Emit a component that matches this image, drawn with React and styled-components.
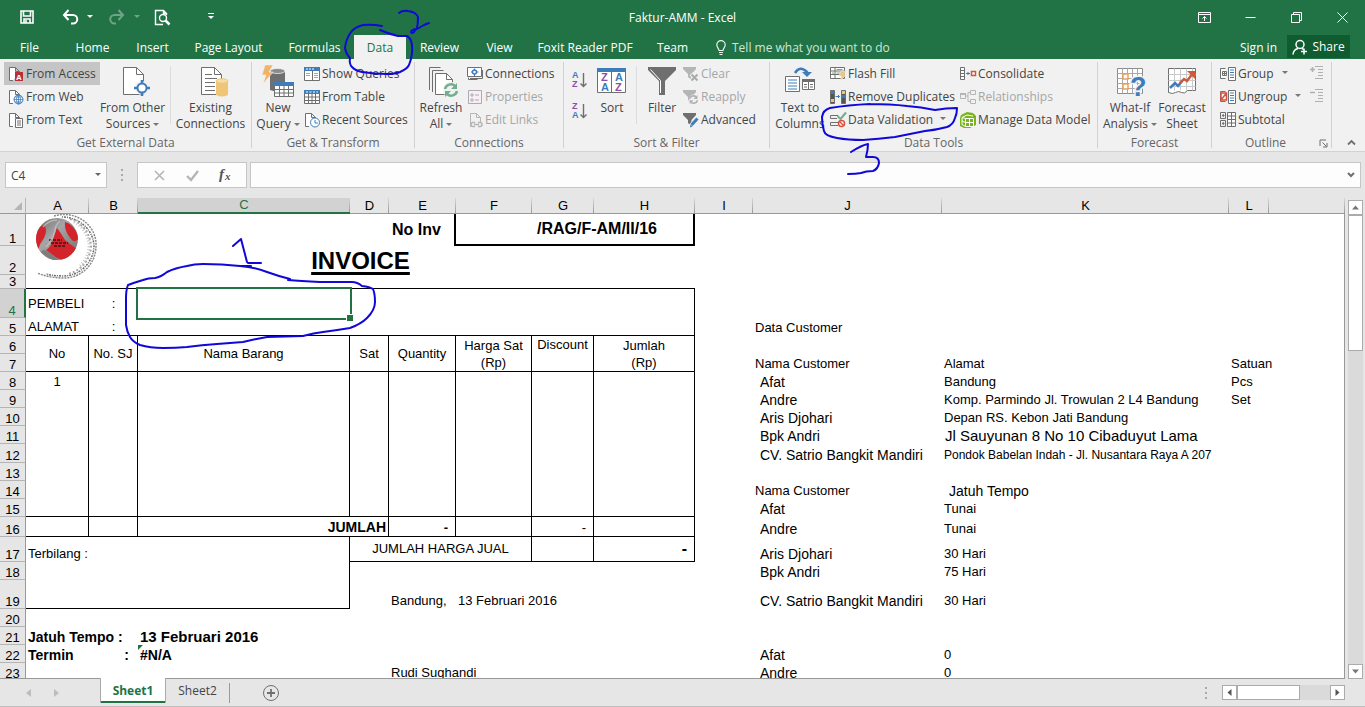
import React from "react"
import styled, { createGlobalStyle, css } from "styled-components"

const GlobalStyle = createGlobalStyle`
  * {
    box-sizing: border-box;
  }
  body {
    margin: 0;
    background: #e6e6e6;
    font-family: "Open Sans", "Noto Sans", sans-serif;
    font-size: 12px;
    color: #444;
  }
  button,
  input {
    font: inherit;
    color: inherit;
    margin: 0;
    padding: 0;
    border: 0;
    background: none;
  }
  svg {
    display: block;
    flex: none;
    overflow: visible;
  }
`

const AppShell = styled.div`
  position: relative;
  display: flex;
  flex-direction: column;
  height: 100vh;
  overflow: hidden;
`

/* ---------- title bar and tabs ---------- */

const TitleBar = styled.header`
  display: grid;
  grid-template-columns: 1fr auto 1fr;
  align-items: center;
  height: 34px;
  flex: none;
  background: #217346;
  color: #fff;
`
const QuickAccess = styled.div`
  display: flex;
  align-items: center;
  padding-left: 19px;
`
const QuickButton = styled.button`
  display: flex;
  align-items: center;
  gap: 8px;
  margin-right: ${p => p.$after || 0}px;
  color: #fff;
  opacity: ${p => (p.disabled ? 0.35 : 1)};
`
const WindowButtons = styled.div`
  display: flex;
  justify-content: flex-end;
`
const WindowButton = styled.button`
  display: flex;
  flex: none;
  align-items: center;
  justify-content: center;
  width: 46px;
  height: 32px;
`
const TabBar = styled.nav`
  display: flex;
  align-items: stretch;
  gap: 1px;
  height: 25px;
  flex: none;
  padding: 1px 15px 0 6px;
  background: #217346;
  color: #fff;
`
const Tab = styled.button`
  width: ${p => p.$width}px;
  text-align: center;
  white-space: nowrap;
  &:first-child {
    margin-right: 8px;
  }
  ${p =>
    p.$active &&
    css`
      background: #f1f1f1;
      color: #217346;
    `}
`
const TellMe = styled.button`
  display: flex;
  align-items: center;
  gap: 6px;
  margin: 0 auto 0 14px;
  color: #cfe6d8;
  white-space: nowrap;
`
const SignIn = styled.a`
  align-self: center;
  margin-right: 9px;
  color: #fff;
  text-decoration: none;
`
const ShareButton = styled.button`
  display: flex;
  align-items: center;
  justify-content: center;
  gap: 4px;
  width: 63px;
  margin-bottom: 1px;
  background: #0e5c2f;
  color: #fff;
`

/* ---------- ribbon ---------- */

const Ribbon = styled.section`
  display: flex;
  flex: none;
  height: 93px;
  padding-top: 3px;
  background: #f1f1f1;
  border-bottom: 1px solid #d2d2d2;
`
const Group = styled.div`
  display: flex;
  flex-direction: column;
  flex: none;
  width: ${p => p.$width}px;
  height: 86px;
  border-right: 1px solid #d2d2d2;
`
const GroupBody = styled.div`
  display: flex;
  height: 69px;
  padding-left: ${p => p.$pad || 4}px;
`
const GroupFooter = styled.div`
  display: flex;
  align-items: center;
  height: 24px;
  padding-right: ${p => (p.$launcher ? 3 : 0)}px;
`
const GroupLabel = styled.div`
  flex: 1;
  text-align: center;
  line-height: 24px;
  color: #666;
`
const LargeButton = styled.button`
  display: flex;
  flex-direction: column;
  align-items: center;
  flex: none;
  gap: 2px;
  width: ${p => p.$width}px;
  padding-top: 4px;
  line-height: 16px;
  white-space: nowrap;
`
const SmallColumn = styled.div`
  display: flex;
  flex-direction: column;
  align-items: stretch;
  flex: none;
  width: ${p => p.$width}px;
  height: 69px;
`
const SmallButton = styled.button`
  display: flex;
  align-items: center;
  gap: 2px;
  height: 23px;
  padding-left: 4px;
  white-space: nowrap;
  background: ${p => (p.$active ? "#c5c5c5" : "transparent")};
  color: ${p => (p.disabled ? "#a6a6a6" : "#444")};
`
const Divider = styled.div`
  width: 1px;
  height: 58px;
  margin: 4px ${p => p.$gap}px 0;
  background: #dcdcdc;
`
const SortColumn = styled.div`
  display: flex;
  flex-direction: column;
  gap: 13px;
  width: 24px;
  padding-top: 9px;
`
const IconColumn = styled.div`
  display: flex;
  flex-direction: column;
  gap: 7px;
  padding-top: 3px;
`
const RibbonEnd = styled.div`
  display: flex;
  flex: 1;
  align-items: flex-end;
  justify-content: center;
  padding: 0 0 5px 5px;
`
const Caret = styled.span`
  display: inline-block;
  margin: 0 0 2px ${p => p.$gap || 3}px;
  border: 3px solid transparent;
  border-top-color: ${p => p.$color || "#777"};
  border-bottom: 0;
`

/* ---------- formula bar ---------- */

const FormulaRow = styled.div`
  display: flex;
  align-items: center;
  flex: none;
  height: 46px;
  padding: 0 4px 0 5px;
`
const FieldBox = styled.div`
  display: flex;
  align-items: center;
  height: 26px;
  width: ${p => (p.$width ? `${p.$width}px` : "auto")};
  flex: ${p => (p.$width ? "none" : "1")};
  padding: 0 5px;
  background: #fdfdfd;
  border: 1px solid #c6c6c6;
`
const FormulaField = styled(FieldBox)`
  margin-left: 3px;
`
const FieldInput = styled.input`
  flex: 1;
  min-width: 0;
  height: 22px;
  outline: 0;
`
const FormulaButton = styled.button`
  display: flex;
  flex: 1;
  justify-content: center;
`
const Dots = styled.div`
  display: flex;
  flex-direction: column;
  align-items: center;
  gap: 3px;
  width: ${p => p.$width}px;
  &::before,
  &::after,
  span {
    content: "";
    width: 2px;
    height: 2px;
    background: #a8a8a8;
  }
`

/* ---------- sheet ---------- */

const SheetArea = styled.main`
  display: flex;
  flex: 1;
  min-height: 0;
`
const GridPane = styled.div`
  flex: 1;
  min-width: 0;
  overflow: hidden;
  border-bottom: 1px solid #999;
`
const Grid = styled.table`
  width: 100%;
  table-layout: fixed;
  border-collapse: separate;
  border-spacing: 0;
  background: #fff;
  font-family: "Liberation Sans", Arial, sans-serif;
  font-size: 13px;
  line-height: 16px;
  color: #000;
`
const ColumnHead = styled.th`
  height: 16px;
  padding: 0;
  font-weight: normal;
  line-height: 15px;
  border-bottom: 1px solid #999;
  background: linear-gradient(#d8d8d8, #999) right / 1px 100% no-repeat #e6e6e6;
  ${p =>
    p.$active &&
    css`
      background-color: #d2d2d2;
      border-bottom: 2px solid #217346;
      line-height: 14px;
      color: #217346;
    `}
`
const CornerHead = styled.th`
  padding: 0 3px 3px 0;
  background: #e6e6e6;
  border-bottom: 1px solid #999;
  border-right: 1px solid #b5b5b5;
  vertical-align: bottom;
`
const CornerMark = styled.div`
  width: 0;
  margin-left: auto;
  border-left: 8px solid transparent;
  border-bottom: 8px solid #b5b5b5;
`
const RowHead = styled.th`
  padding: 0;
  font-weight: normal;
  line-height: 13px;
  vertical-align: bottom;
  background: #e6e6e6;
  border-bottom: 1px solid #b5b5b5;
  border-right: 1px solid #999;
  ${p =>
    p.$active &&
    css`
      background: #d2d2d2;
      border-right: 2px solid #217346;
      color: #217346;
    `}
`
const Cell = styled.td`
  position: relative;
  padding: 0 ${p => p.$padRight ?? 2}px 0 ${p => p.$pad ?? 2}px;
  white-space: pre;
  font-size: ${p => p.$size || 13}px;
  font-weight: ${p => (p.$bold ? "bold" : "normal")};
  text-align: ${p => p.$align || "left"};
  vertical-align: ${p => p.$valign || "bottom"};
  line-height: ${p => p.$line || 16}px;
  border: 0 solid #000;
  border-right-width: ${p => p.$right}px;
  border-bottom-width: ${p => p.$bottom}px;
`
const EdgeCell = styled.td`
  border-right: 1px solid #999;
`
const Heading = styled.span`
  text-decoration: underline;
  text-decoration-thickness: 3px;
  text-underline-offset: 3px;
  text-decoration-skip-ink: none;
`
const Picture = styled.div`
  position: absolute;
  z-index: 1;
  top: 0;
  left: 8px;
`
const Selection = styled.div`
  position: absolute;
  z-index: 2;
  inset: -2px -2px -2px -2px;
  border: 2px solid #217346;
  &::after {
    content: "";
    position: absolute;
    right: -3px;
    bottom: -3px;
    width: 6px;
    height: 6px;
    background: #217346;
    border: solid #fff;
    border-width: 1px 0 0 1px;
  }
`
const ErrorFlag = styled.span`
  position: absolute;
  top: 0;
  left: 0;
  border-top: 5px solid #217346;
  border-right: 5px solid transparent;
`

/* ---------- scroll bars and sheet tabs ---------- */

const ScrollColumn = styled.div`
  display: flex;
  flex-direction: column;
  flex: none;
  width: 15px;
  margin: 2px 2px 0 3px;
  background: #dadada;
`
const ScrollRow = styled.div`
  display: flex;
  width: 123px;
  height: 15px;
  margin-right: 20px;
  background: #dadada;
`
const ScrollButton = styled.button`
  display: flex;
  align-items: center;
  justify-content: center;
  flex: none;
  width: 15px;
  height: 15px;
  background: #fff;
  border: 1px solid #ababab;
`
const Thumb = styled.div`
  flex: none;
  width: ${p => p.$width}px;
  height: ${p => p.$height}px;
  margin: 0 auto auto 0;
  background: #fff;
  border: 1px solid #ababab;
`
const SheetBar = styled.footer`
  display: flex;
  align-items: center;
  flex: none;
  height: 28px;
  border-bottom: 1px solid #c0c0c0;
`
const SheetNav = styled.div`
  display: flex;
  gap: 23px;
  width: 100px;
  padding-left: 26px;
`
const SheetTab = styled.button`
  align-self: flex-start;
  flex: none;
  width: ${p => (p.$active ? 66 : 63)}px;
  height: 25px;
  margin-top: -1px;
  ${p =>
    p.$active &&
    css`
      position: relative;
      background: #fff;
      border: solid #ababab;
      border-width: 0 1px;
      box-shadow: inset 0 -2px #217346;
      font-weight: bold;
      color: #217346;
    `}
`
const TabDivider = styled.div`
  width: 1px;
  height: 20px;
  margin-right: 33px;
  background: #999;
`
const AddSheet = styled.button`
  margin-right: auto;
`

const Ink = styled.svg`
  position: absolute;
  z-index: 5;
  top: 0;
  left: 0;
  pointer-events: none;
`

/* ---------- icons ---------- */

const GRAY = "#6f6f6f"
const BLUE = "#3f7cba"
const PURPLE = "#8a4fa8"
const GREEN = "#6fae8e"
const SAND = "#efc678"

const Icon = ({ size = 16, width, height, children, ...rest }) => (
  <svg
    width={width || size}
    height={height || size}
    viewBox={`0 0 ${width || size} ${height || size}`}
    fill="none"
    stroke={GRAY}
    aria-hidden="true"
    {...rest}
  >
    {children}
  </svg>
)

const SmallPage = () => (
  <path d="M5 14.500H1.500V1.500H7.500L11.500 5.500V7M7.500 1.500V5.500H11.500" fill="#fff" />
)

const Letter = ({ x, y, size, color, children }) => (
  <text
    x={x}
    y={y}
    fontSize={size}
    fontWeight="bold"
    fontFamily="Liberation Sans"
    fill={color}
    stroke="none"
  >
    {children}
  </text>
)

const AccessIcon = () => (
  <Icon>
    <SmallPage />
    <path d="M7 6h8v9H7z" fill="#b5303a" stroke="none" />
    <Letter x={8} y={14} size={8} color="#fff">A</Letter>
  </Icon>
)
const WebIcon = () => (
  <Icon>
    <SmallPage />
    <circle cx="10.500" cy="10.500" r="4.500" fill="#fff" stroke={BLUE} />
    <path d="M6 10.500h9M10.500 6v9M7 8h7M7 13h7" stroke={BLUE} strokeWidth=".8" />
    <ellipse cx="10.500" cy="10.500" rx="2" ry="4.500" stroke={BLUE} strokeWidth=".8" />
  </Icon>
)
const TextIcon = () => (
  <Icon>
    <SmallPage />
    <path d="M7.500 6.500h7v9h-7z" fill="#fff" />
    <path d="M9 9h4M9 11h4M9 13h4" />
  </Icon>
)
const OtherSourcesIcon = () => (
  <Icon size={32}>
    <path d="M6.500 1.500h13l7 7v20h-20z" fill="#fff" />
    <path d="M19.500 1.500v7h7" />
    <circle cx="25" cy="22" r="7" fill="#f1f1f1" stroke="none" />
    <circle cx="25" cy="22" r="4.500" fill="#fff" stroke={BLUE} strokeWidth="2" />
    <path d="M25 14v4M25 26v4M17 22h4M29 22h4" stroke={BLUE} strokeWidth="2.500" />
  </Icon>
)
const ExistingIcon = () => (
  <Icon size={32}>
    <path d="M6.500 1.500h13l7 7v20h-20z" fill="#fff" />
    <path d="M19.500 1.500v7h7M10 8.500h7M10 12.500h12M10 16.500h10M10 20.500h10M10 24.500h10" />
    <path d="M21 15v14q6 3 12 0V15z" fill={SAND} stroke="none" />
    <ellipse cx="27" cy="15" rx="6" ry="2.200" fill="#f6dca6" stroke={SAND} />
  </Icon>
)
const NewQueryIcon = () => (
  <Icon size={32}>
    <path d="M8 5v19q7 3 15 1V5z" fill={GRAY} stroke="none" />
    <ellipse cx="15.500" cy="5" rx="7.500" ry="2.500" fill="#8b8b8b" stroke="#f1f1f1" strokeWidth=".8" />
    <path d="M3-1h8L7 6h4L1 18l3-9H0z" fill="#f0b36b" stroke="#f1f1f1" strokeWidth=".6" />
    <path d="M12.500 16.500h19v14h-19z" fill="#fff" />
    <path d="M12 16h20v4H12z" fill={BLUE} stroke="none" />
    <path d="M12.500 23.500h19M12.500 27h19M17.500 20v10.500M22 20v10.500M26.500 20v10.500" />
  </Icon>
)
const ShowQueriesIcon = () => (
  <Icon>
    <path d="M.5 1.500h15v13H.5z" fill="#fff" />
    <path d="M0 1h16v4H0z" fill={BLUE} stroke="none" />
    <path d="M8.500 5v9.500" />
    <path d="M2 7.500h4M2 9.500h4M10 7.500h4M10 9.500h4M10 11.500h4" stroke="#8fa9c6" />
    <path d="M2 3h8" stroke="#fff" strokeDasharray="2 1" />
  </Icon>
)
const TableIcon = () => (
  <Icon>
    <path d="M.5 1.500h15v13H.5z" fill="#fff" />
    <path d="M0 1h16v4H0z" fill={BLUE} stroke="none" />
    <path d="M.5 8h15M.5 11.500h15M4.500 5v9.500M8 5v9.500M11.500 5v9.500" />
    <path d="M2 3h12" stroke="#fff" strokeDasharray="2 1.500" />
  </Icon>
)
const RecentIcon = () => (
  <Icon>
    <SmallPage />
    <circle cx="11" cy="10.500" r="4.500" fill="#fff" stroke={BLUE} />
    <path d="M11 8v3h3" stroke={BLUE} />
  </Icon>
)
const RefreshMark = ({ x, y, color = GREEN, scale = 1 }) => (
  <g transform={`translate(${x} ${y}) scale(${scale})`} stroke={color} strokeWidth="2.500">
    <path d="M1 6A6 6 0 0 1 11 3M13 8A6 6 0 0 1 3 11" />
    <path d="M13 0v6H7zM1 14V8h6z" fill={color} stroke="none" />
  </g>
)
const RefreshAllIcon = () => (
  <Icon size={32}>
    <path d="M4.500 24V1.500h11M7.500 26V4.500h11" />
    <path d="M10.500 7.500h11l6 6v15h-17z" fill="#fff" />
    <path d="M21.500 7.500v6h6" />
    <circle cx="26" cy="24" r="8" fill="#f1f1f1" stroke="none" />
    <RefreshMark x={19} y={17} />
  </Icon>
)
const ConnectionsIcon = () => (
  <Icon>
    <path d="M1.500 11.500v2h9M.500 1.500h14v9H.500z" fill="#fff" />
    <path d="M15.500 4v8.500H3" />
    <circle cx="7.500" cy="6" r="2" stroke={BLUE} strokeWidth="1.500" />
    <path d="M7.500 2.500v2M7.500 8v2M4 6h1.500M9.500 6h2" stroke={BLUE} />
  </Icon>
)
const PropertiesIcon = () => (
  <Icon stroke="#b0a8b4">
    <path d="M1.500 1.500h13v13h-13z" fill="#f6f0f6" />
    <path d="M4 5h2v2H4zM4 10h2v2H4zM8 6h4M8 11h4" />
  </Icon>
)
const EditLinksIcon = () => (
  <Icon stroke="#b5b5b5">
    <path d="M6 14.500H3.500V1.500H9.500L13.500 5.500V10M9.500 1.500V5.500H13.500" />
    <path d="M8 10.500H6a2 2 0 0 0 0 4h2M11 10.500h2a2 2 0 0 1 0 4h-2M7 12.500h5" strokeWidth="1.500" />
  </Icon>
)
const SortArrowIcon = ({ top, bottom }) => (
  <Icon width={16} height={18}>
    <Letter x={0} y={7} size={9} color={top === "A" ? BLUE : PURPLE}>{top}</Letter>
    <Letter x={0} y={16} size={9} color={bottom === "A" ? BLUE : PURPLE}>{bottom}</Letter>
    <path d="M11.500 2v13M8.500 12.500l3 3 3-3" strokeWidth="1.400" />
  </Icon>
)
const SortIcon = () => (
  <Icon size={32}>
    <path d="M1.500 2.500h28v24h-28z" fill="#fff" />
    <path d="M15.500 6v20" />
    <path d="M1 2h29v4H1z" fill={BLUE} stroke="none" />
    <Letter x={5} y={15} size={11} color={PURPLE}>Z</Letter>
    <Letter x={5} y={25} size={11} color={BLUE}>A</Letter>
    <Letter x={19} y={15} size={11} color={BLUE}>A</Letter>
    <Letter x={19} y={25} size={11} color={PURPLE}>Z</Letter>
  </Icon>
)
const FilterIcon = () => (
  <Icon size={32}>
    <path d="M2 1h28v3L19 15v14h-6V15L2 4z" fill={GRAY} stroke="none" />
    <path d="M4.500 3.500l10 11V27" stroke="#fff" />
  </Icon>
)
const SmallFunnel = ({ color }) => (
  <path d="M0 1h13v2L8.500 8v6L5 11V8L0 3z" fill={color} stroke="none" />
)
const ClearIcon = () => (
  <Icon>
    <SmallFunnel color="#b5b5b5" />
    <path d="M8 8l7 7M15 8l-7 7" stroke="#f1f1f1" strokeWidth="4" />
    <path d="M8.500 8.500l6 6M14.500 8.500l-6 6" stroke="#aaa" strokeWidth="2" />
  </Icon>
)
const ReapplyIcon = () => (
  <Icon>
    <SmallFunnel color="#b5b5b5" />
    <circle cx="11" cy="10.500" r="5" fill="#f1f1f1" stroke="none" />
    <RefreshMark x={6} y={6} color="#b0b0b0" scale={0.65} />
  </Icon>
)
const AdvancedIcon = () => (
  <Icon>
    <SmallFunnel color={GRAY} />
    <path d="M15 6l-6 7-2 3" stroke="#f1f1f1" strokeWidth="5" />
    <path d="M14.500 6.500L8.500 13" stroke={BLUE} strokeWidth="3" />
    <path d="M7 15.500l.5-3 2 2z" fill={BLUE} stroke="none" />
  </Icon>
)
const TextToColumnsIcon = () => (
  <Icon size={32}>
    <path d="M1.500 10.500h14v15h-14z" fill="#fff" />
    <path d="M4 14h9M4 17h9M4 20h9M4 23h9" stroke={BLUE} />
    <path d="M18.500 13.500h12v10h-12z" fill="#fff" />
    <path d="M18 13h13v3H18z" fill={GRAY} stroke="none" />
    <path d="M24.500 16v8M20 18.500h3M20 21h3M26 18.500h3M26 21h3" />
    <path d="M11 7q5-8 12-1v2" stroke={BLUE} strokeWidth="2.500" />
    <path d="M18 6h10l-5 5z" fill={BLUE} stroke="none" />
  </Icon>
)
const FlashFillIcon = () => (
  <Icon>
    <path d="M.5 1.500h14v11H.5z" fill="#fff" />
    <path d="M.5 5h14M.5 8.500h14M5 1.500v11" />
    <path d="M6.500 3.500h6M6.500 7h6M2 7h2" stroke={GREEN} />
    <path d="M11 5h5l-2 4h2l-6 6 1.500-5H9z" fill={SAND} stroke="#f1f1f1" strokeWidth=".5" />
  </Icon>
)
const DuplicatesIcon = () => (
  <Icon>
    <path d="M.5 1.500h4v13h-4zM11.500 1.500h4v13h-4z" fill="#555" />
    <path d="M1 2h3v3H1zM12 6h3v3h-3z" fill={BLUE} stroke="none" />
    <path d="M1 10h3v3H1zM12 2h3v3h-3z" fill={SAND} stroke="none" />
    <path d="M5.500 7.500h4M8 6l1.500 1.500L8 9" stroke={BLUE} />
  </Icon>
)
const ValidationIcon = () => (
  <Icon>
    <path d="M8 3.500H.5v3H7M8 10.500H.5v3H8" />
    <path d="M7.500 4l3 3L16 .5" stroke={GREEN} strokeWidth="2" />
    <circle cx="11.500" cy="11.500" r="3" fill="#fff" stroke="#d9503c" strokeWidth="1.500" />
    <path d="M9.500 9.500l4 4" stroke="#d9503c" strokeWidth="1.500" />
  </Icon>
)
const ConsolidateIcon = () => (
  <Icon>
    <path d="M.5 1.500h4v12h-4zM.5 4.500h4M.5 7.500h4M.5 10.500h4" fill="#fff" />
    <path d="M6 7.500h4M8 6v3" stroke={BLUE} />
    <path d="M11.500 5.500h4v4h-4z" fill="#fff" stroke="#d9503c" strokeWidth="1.500" />
  </Icon>
)
const RelationshipsIcon = () => (
  <Icon stroke="#b5b5b5">
    <path d="M.5 4.500h5v5h-5zM10.500 1.500h5v4h-5zM10.500 10.500h5v4h-5zM5.500 7h2.500M8 3.500V12.500M8 3.500h2.500M8 12.500h2.500" />
    <path d="M0 4h6v2H0z" fill="#b5b5b5" stroke="none" />
  </Icon>
)
const ModelIcon = () => (
  <Icon>
    <path d="M1 3l6-3 6 1 3 3v9l-6 3H4l-4-2V6z" fill="#7ab41d" stroke="none" />
    <path d="M2 5.500L7 3l6 1M5.500 6.500h8v8h-8zM5.500 10.500h8M9.500 6.500v8M2 5.500v7l3.500 2M2 9l3.500 1.500M2 5.500l3.500 1" stroke="#fff" />
  </Icon>
)
const WhatIfIcon = () => (
  <Icon size={32}>
    <path d="M3.500 2.500h25v25h-25z" fill="#fff" stroke="#8c8c8c" />
    <path d="M8.500 2.500v25M13.500 2.500v25M18.500 2.500v25M23.500 2.500v25M3.500 7.500h25M3.500 12.500h25M3.500 17.500h25M3.500 22.500h25" stroke="#a8a8a8" />
    <path d="M9 8h5v5H9zM9 18h5v5H9z" fill="#fff" stroke="#e8a25c" strokeWidth="1.500" />
    <text x="16" y="30" fontSize="27" fontWeight="bold" fontFamily="Liberation Sans" fill={BLUE} stroke="#f1f1f1" strokeWidth="3" paintOrder="stroke">?</text>
  </Icon>
)
const ForecastIcon = () => (
  <Icon size={32}>
    <path d="M2.500 2.500h27v22h-8q-3 4-6 2t-6 0-7 0z" fill="#fff" />
    <path d="M8.500 2.500v22M14.500 2.500v22M20.500 2.500v22M26.500 2.500v22M2.500 8.500h27M2.500 14.500h27M2.500 20.500h27" stroke="#c9c9c9" />
    <path d="M4 22l5-5 3 3 4-5" stroke={BLUE} strokeWidth="2.500" />
    <path d="M14 17l4-4 3 2 6-8" stroke="#cf5b36" strokeWidth="2.500" />
    <path d="M21 5h8v8z" fill="#cf5b36" stroke="none" />
  </Icon>
)
const GroupIcon = ({ ungroup }) => (
  <Icon>
    <path d="M5.500 2.500h-5v10h5M8.500 1.500h7v13h-7z" fill="#fff" />
    <path d="M10 4h4M10 6.500h4M10 9h4M10 11.500h4" stroke={BLUE} />
    {ungroup ? (
      <path d="M1 4h5.500v7H1zM1 11L6.500 4" stroke="#d9503c" strokeWidth="1.500" />
    ) : (
      <path d="M2.500 5.500h4v4h-4zM3 7.500h3M4.500 6v3" />
    )}
  </Icon>
)
const SubtotalIcon = () => (
  <Icon>
    <path d="M.5.5h5v6h-5zM.5 8.500h5v6h-5zM2 3.500h2.500M3.200 2v3M2 11.500h2.500M3.200 10v3" />
    <path d="M7.500.5h8v14h-8zM7.500 4h8M7.500 7.500h8M7.500 11h8M11.500.5v14" fill="#fff" />
  </Icon>
)
const DetailIcon = ({ plus }) => (
  <Icon stroke="#b0b0b0">
    <path d={plus ? "M1 4.500h5M3.500 2v5" : "M1 4.500h5"} strokeWidth="1.500" />
    <path d="M6 1.500h8M9 4.500h5M9 7.500h5M9 10.500h5M6 13.500h8" />
  </Icon>
)

const LogoPicture = () => (
  <svg width="64" height="66" viewBox="0 0 64 66" fill="none" aria-label="Logo" role="img">
    <defs>
      <linearGradient id="shell" x1="0" y1="0" x2="1" y2="1">
        <stop offset="0" stopColor="#6a6a6a" />
        <stop offset=".4" stopColor="#a5a5a5" />
        <stop offset="1" stopColor="#6e6e6e" />
      </linearGradient>
      <clipPath id="ballClip">
        <circle cx="23" cy="25" r="21" />
      </clipPath>
    </defs>
    <path d="M20 2A32 30 0 0 1 62 32A32 32 0 0 1 30 64Q16 64 3 59" stroke="#8a8a8a" strokeWidth="1.500" strokeDasharray="2 1" />
    <path d="M28 3A32 30 0 0 1 60 32A31 31 0 0 1 30 62Q20 62 12 60" stroke="#6a6a6a" strokeWidth="1.500" strokeDasharray="1 1 2 1" />
    <path d="M36 5A28 30 0 0 1 57 32A30 30 0 0 1 34 60" stroke="#a5a5a5" strokeWidth="2" strokeDasharray="2 2" />
    <path d="M40 8A26 28 0 0 1 55 30A28 28 0 0 1 46 52" stroke="#c4c4c4" strokeWidth="3" strokeDasharray="1 2" />
    <circle cx="23" cy="25" r="21" fill="url(#shell)" />
    <g clipPath="url(#ballClip)" fill="#d3242b">
      <path d="M1 24Q2 13 10 11q4 5 0 13-4 5-6 12z" />
      <path d="M31 8q9 2 14 16-4 6-8 1-7-8-6-17z" />
      <path d="M23 14q4 5 8 12 6 5 12 9-4 9-11 12l-9-3-11-8q4-2 7-10 2-8 4-12z" />
      <path d="M10 36q8 2 14 11l-4 2Q12 42 6 38z" fill="#7d7d7d" />
      <path d="M15 26h13M17 29h17M20 32h12" stroke="#4a1014" strokeWidth="1.500" strokeDasharray="3 1" />
    </g>
    <path d="M9 13Q15 6 23 6M26 7q-5 4-5 10-3 10-9 16" stroke="#c8c8c8" strokeWidth="1.500" opacity=".7" />
  </svg>
)

/* ---------- sheet data ---------- */

const columns = [
  ["A", 63], ["B", 49], ["C", 212], ["D", 39], ["E", 67], ["F", 76], ["G", 62],
  ["H", 101], ["I", 58], ["J", 189], ["K", 287], ["L", 40],
]
const letters = columns.map(([name]) => name)

const rowHeights = [
  32, 29, 14, 29, 18, 18, 18, 18, 18, 18, 18, 19, 18, 18, 18, 20, 25, 18, 29, 18, 18, 18, 18,
]

const head = { align: "center", valign: "middle", rows: 2, line: 17 }
const name = { size: 14, pad: 7 }

const cells = {
  A1: { text: <Picture><LogoPicture /></Picture> },
  E1: { text: "No Inv", size: 16, bold: true, valign: "middle", pad: 3, right: 2 },
  F1: { text: "/RAG/F-AM/II/16", cols: 3, size: 16, bold: true, valign: "middle", align: "right", padRight: 36, right: 2, bottom: 2 },
  A2: { text: <Heading>INVOICE</Heading>, cols: 8, size: 24, bold: true, align: "center", valign: "middle" },
  A4: { text: "PEMBELI", valign: "middle" },
  B4: { text: ":", align: "center", valign: "middle" },
  C4: { text: <Selection /> },
  A5: { text: "ALAMAT", valign: "middle" },
  B5: { text: ":", align: "center", valign: "middle" },
  J5: { text: "Data Customer" },
  A6: { text: "No", ...head },
  B6: { text: "No. SJ", ...head },
  C6: { text: "Nama Barang", ...head },
  D6: { text: "Sat", ...head },
  E6: { text: "Quantity", ...head },
  F6: { text: "Harga Sat\n(Rp)", ...head },
  G6: { text: "Discount", ...head, valign: "top" },
  H6: { text: "Jumlah\n(Rp)", ...head },
  J7: { text: "Nama Customer" },
  K7: { text: "Alamat" },
  L7: { text: "Satuan" },
  A8: { text: "1", align: "center" },
  J8: { text: "Afat", ...name },
  K8: { text: "Bandung" },
  L8: { text: "Pcs" },
  J9: { text: "Andre", ...name },
  K9: { text: "Komp. Parmindo Jl. Trowulan 2 L4 Bandung" },
  L9: { text: "Set" },
  J10: { text: "Aris Djohari", ...name },
  K10: { text: "Depan RS. Kebon Jati Bandung" },
  J11: { text: "Bpk Andri", ...name },
  K11: { text: "Jl Sauyunan 8 No 10 Cibaduyut Lama", size: 15, pad: 3 },
  J12: { text: "CV. Satrio Bangkit Mandiri", ...name },
  K12: { text: "Pondok Babelan Indah - Jl. Nusantara Raya A 207", size: 12 },
  J14: { text: "Nama Customer" },
  K14: { text: "Jatuh Tempo", ...name },
  J15: { text: "Afat", ...name },
  K15: { text: "Tunai" },
  C16: { text: "JUMLAH", cols: 2, size: 14, bold: true, align: "right", valign: "middle" },
  E16: { text: "-", bold: true, align: "right", padRight: 7 },
  G16: { text: "-", align: "right", padRight: 7 },
  J16: { text: "Andre", ...name },
  K16: { text: "Tunai" },
  A17: { text: "Terbilang :" },
  D17: { text: "JUMLAH HARGA JUAL", cols: 3, align: "center", valign: "middle" },
  H17: { text: "-", size: 16, bold: true, align: "right", valign: "middle", padRight: 7 },
  J17: { text: "Aris Djohari", ...name },
  K17: { text: "30 Hari" },
  J18: { text: "Bpk Andri", ...name },
  K18: { text: "75 Hari" },
  E19: { text: "Bandung," },
  F19: { text: "13 Februari 2016" },
  J19: { text: "CV. Satrio Bangkit Mandiri", ...name },
  K19: { text: "30 Hari" },
  A21: { text: "Jatuh Tempo :", cols: 2, size: 14, bold: true },
  C21: { text: "13 Februari 2016", size: 15, bold: true },
  A22: { text: "Termin", size: 14, bold: true },
  B22: { text: ":", size: 14, bold: true, align: "right", padRight: 9 },
  C22: { text: <><ErrorFlag />#N/A</>, size: 14, bold: true },
  J22: { text: "Afat", ...name },
  K22: { text: "0" },
  E23: { text: "Rudi Sughandi" },
  J23: { text: "Andre", ...name },
  K23: { text: "0" },
}

// lines of the invoice form, by the last column and row that a cell covers
const hasRight = (col, row) =>
  (row >= 6 && row <= 16 && col <= "H") ||
  (row >= 4 && row <= 5 && col === "H") ||
  (row >= 17 && row <= 19 && col === "C") ||
  (row === 17 && col >= "F" && col <= "H")

const hasBottom = (col, row) =>
  ([3, 5, 7, 15, 16].includes(row) && col <= "H") ||
  (row === 17 && col >= "D" && col <= "H") ||
  (row === 19 && col <= "C")

const covered = new Set()
Object.entries(cells).forEach(([id, { cols = 1, rows = 1 }]) => {
  const c = letters.indexOf(id[0])
  const r = Number(id.slice(1))
  for (let i = 0; i < cols; i++) {
    for (let j = 0; j < rows; j++) {
      if (i || j) covered.add(letters[c + i] + (r + j))
    }
  }
})

const SheetCell = ({ col, row }) => {
  if (covered.has(col + row)) return null
  const cell = cells[col + row] || {}
  const { cols = 1, rows = 1 } = cell
  const lastCol = letters[letters.indexOf(col) + cols - 1]
  const lastRow = row + rows - 1
  return (
    <Cell
      colSpan={cols}
      rowSpan={rows}
      $size={cell.size}
      $bold={cell.bold}
      $align={cell.align}
      $valign={cell.valign}
      $pad={cell.pad}
      $padRight={cell.padRight}
      $line={cell.line || (cell.text ? 16 : 1)}
      $right={cell.right || (hasRight(lastCol, lastRow) ? 1 : 0)}
      $bottom={cell.bottom || (hasBottom(lastCol, lastRow) ? 1 : 0)}
    >
      {cell.text}
    </Cell>
  )
}

/* ---------- parts ---------- */

const Large = ({ icon, lines, width, caret }) => (
  <LargeButton type="button" $width={width}>
    {icon}
    <span>
      {lines[0]}
      {lines[1] && <br />}
      {lines[1]}
      {caret && <Caret />}
    </span>
  </LargeButton>
)

const Small = ({ icon, label, active, disabled, caret }) => (
  <SmallButton type="button" $active={active} disabled={disabled}>
    {icon}
    {label}
    {caret && <Caret $gap={caret} />}
  </SmallButton>
)

const RibbonGroup = ({ label, width, pad, launcher, children }) => (
  <Group $width={width}>
    <GroupBody $pad={pad}>{children}</GroupBody>
    <GroupFooter $launcher={launcher}>
      <GroupLabel>{label}</GroupLabel>
      {launcher && (
        <button type="button" aria-label={`${label} settings`}>
          <Icon size={9}>
            <path d="M1 7V1h6M3.500 3.500l4 4M8 4v4H4" />
          </Icon>
        </button>
      )}
    </GroupFooter>
  </Group>
)

const tabs = [
  ["File", 47], ["Home", 61], ["Insert", 57], ["Page Layout", 93], ["Formulas", 77],
  ["Data", 52], ["Review", 65], ["View", 53], ["Foxit Reader PDF", 116], ["Team", 57],
]

const Header = () => (
  <>
    <TitleBar>
      <QuickAccess>
        <QuickButton aria-label="Save" $after={27}>
          <Icon stroke="#fff" strokeWidth="1.600">
            <path d="M2 2h12v12H2zM4.500 2v5h7V2M5 14v-4h6v4" />
            <path d="M7 11v3" />
          </Icon>
        </QuickButton>
        <QuickButton aria-label="Undo" $after={16}>
          <Icon width={18} height={16} stroke="#fff" strokeWidth="2">
            <path d="M2 6h9a4 4 0 0 1 0 8.500H9M6.500 1L2 6l4.500 5" />
          </Icon>
          <Caret $color="#fff" $gap={-1} />
        </QuickButton>
        <QuickButton aria-label="Redo" disabled $after={14}>
          <Icon width={18} height={16} stroke="#fff" strokeWidth="2">
            <path d="M14 6H5.500a4 4 0 0 0 0 8.500H7M9.500 1L14 6l-4.500 5" />
          </Icon>
          <Caret $color="#fff" $gap={-1} />
        </QuickButton>
        <QuickButton aria-label="Print preview" $after={37}>
          <Icon size={17} stroke="#fff" strokeWidth="1.400">
            <path d="M9 15.500H1.500v-14h8l3 3V6M9.500 1.500v3h3" />
            <circle cx="9" cy="9" r="3.500" />
            <path d="M11.500 11.500l4 4" strokeWidth="2.500" />
          </Icon>
        </QuickButton>
        <QuickButton aria-label="Customize toolbar">
          <Icon size={6} stroke="#fff">
            <path d="M0-.5h6" />
            <path d="M0 2h6L3 5z" fill="#fff" stroke="none" />
          </Icon>
        </QuickButton>
      </QuickAccess>
      <div>Faktur-AMM - Excel</div>
      <WindowButtons>
        <WindowButton aria-label="Ribbon display options">
          <Icon width={13} height={11} stroke="#fff">
            <path d="M.5.5h12v10H.5zM.5 2.500h12M6.500 9V4.500M4.500 6.500l2-2 2 2" />
          </Icon>
        </WindowButton>
        <WindowButton aria-label="Minimize">
          <Icon size={11} stroke="#fff"><path d="M.5 5.500h10" /></Icon>
        </WindowButton>
        <WindowButton aria-label="Restore">
          <Icon size={11} stroke="#fff"><path d="M.5 2.500h8v8h-8zM2.500 2.500v-2h8v8h-2" /></Icon>
        </WindowButton>
        <WindowButton aria-label="Close">
          <Icon size={11} stroke="#fff"><path d="M.5.5l10 10M10.500.5l-10 10" /></Icon>
        </WindowButton>
      </WindowButtons>
    </TitleBar>
    <TabBar>
      {tabs.map(([label, width]) => (
        <Tab key={label} type="button" $width={width} $active={label === "Data"}>
          {label}
        </Tab>
      ))}
      <TellMe type="button">
        <Icon width={10} height={15} stroke="#e8f3ec" strokeWidth="1.200">
          <path d="M3 10.500C3 8.500.8 7.500.8 4.800a4.200 4.200 0 0 1 8.400 0C9.200 7.500 7 8.500 7 10.500zM3 12.500h4M3.500 14.500h3" />
        </Icon>
        Tell me what you want to do
      </TellMe>
      <SignIn href="#signin">Sign in</SignIn>
      <ShareButton type="button">
        <Icon size={16} stroke="#fff" strokeWidth="1.500">
          <circle cx="8" cy="5.500" r="4" />
          <path d="M1 15.500q.5-5 5-6M10 9.500l2 1M12 9.500v6M9 12.500h6" />
        </Icon>
        Share
      </ShareButton>
    </TabBar>
  </>
)

const RibbonBar = () => (
  <Ribbon>
    <RibbonGroup label="Get External Data" width={252}>
      <SmallColumn $width={96}>
        <Small icon={<AccessIcon />} label="From Access" active />
        <Small icon={<WebIcon />} label="From Web" />
        <Small icon={<TextIcon />} label="From Text" />
      </SmallColumn>
      <Large icon={<OtherSourcesIcon />} lines={["From Other", "Sources"]} width={65} caret />
      <Divider $gap={5} />
      <Large icon={<ExistingIcon />} lines={["Existing", "Connections"]} width={69} />
    </RibbonGroup>
    <RibbonGroup label="Get & Transform" width={163}>
      <Large icon={<NewQueryIcon />} lines={["New", "Query"]} width={44} caret />
      <SmallColumn $width={110}>
        <Small icon={<ShowQueriesIcon />} label="Show Queries" />
        <Small icon={<TableIcon />} label="From Table" />
        <Small icon={<RecentIcon />} label="Recent Sources" />
      </SmallColumn>
    </RibbonGroup>
    <RibbonGroup label="Connections" width={149}>
      <Large icon={<RefreshAllIcon />} lines={["Refresh", "All"]} width={44} caret />
      <SmallColumn $width={96}>
        <Small icon={<ConnectionsIcon />} label="Connections" />
        <Small icon={<PropertiesIcon />} label="Properties" disabled />
        <Small icon={<EditLinksIcon />} label="Edit Links" disabled />
      </SmallColumn>
    </RibbonGroup>
    <RibbonGroup label="Sort & Filter" width={206} pad={8}>
      <SortColumn>
        <button type="button" aria-label="Sort A to Z"><SortArrowIcon top="A" bottom="Z" /></button>
        <button type="button" aria-label="Sort Z to A"><SortArrowIcon top="Z" bottom="A" /></button>
      </SortColumn>
      <Large icon={<SortIcon />} lines={["Sort"]} width={32} />
      <Divider $gap={8} />
      <Large icon={<FilterIcon />} lines={["Filter"]} width={34} />
      <SmallColumn $width={86}>
        <Small icon={<ClearIcon />} label="Clear" disabled />
        <Small icon={<ReapplyIcon />} label="Reapply" disabled />
        <Small icon={<AdvancedIcon />} label="Advanced" />
      </SmallColumn>
    </RibbonGroup>
    <RibbonGroup label="Data Tools" width={328}>
      <Large icon={<TextToColumnsIcon />} lines={["Text to", "Columns"]} width={52} />
      <SmallColumn $width={130}>
        <Small icon={<FlashFillIcon />} label="Flash Fill" />
        <Small icon={<DuplicatesIcon />} label="Remove Duplicates" />
        <Small icon={<ValidationIcon />} label="Data Validation" caret={5} />
      </SmallColumn>
      <SmallColumn $width={134}>
        <Small icon={<ConsolidateIcon />} label="Consolidate" />
        <Small icon={<RelationshipsIcon />} label="Relationships" disabled />
        <Small icon={<ModelIcon />} label="Manage Data Model" />
      </SmallColumn>
    </RibbonGroup>
    <RibbonGroup label="Forecast" width={114} pad={5}>
      <Large icon={<WhatIfIcon />} lines={["What-If", "Analysis"]} width={54} caret />
      <Large icon={<ForecastIcon />} lines={["Forecast", "Sheet"]} width={50} />
    </RibbonGroup>
    <RibbonGroup label="Outline" width={120} launcher>
      <SmallColumn $width={93}>
        <Small icon={<GroupIcon />} label="Group" caret={6} />
        <Small icon={<GroupIcon ungroup />} label="Ungroup" caret={6} />
        <Small icon={<SubtotalIcon />} label="Subtotal" />
      </SmallColumn>
      <IconColumn>
        <DetailIcon plus />
        <DetailIcon />
      </IconColumn>
    </RibbonGroup>
    <RibbonEnd>
      <button type="button" aria-label="Collapse ribbon">
        <Icon width={9} height={7} strokeWidth="1.800"><path d="M1 5.500l3.500-3.500 3.500 3.500" /></Icon>
      </button>
    </RibbonEnd>
  </Ribbon>
)

const FormulaBar = () => (
  <FormulaRow>
    <FieldBox $width={102}>
      <FieldInput aria-label="Name box" defaultValue="C4" />
      <Caret $color="#666" />
    </FieldBox>
    <Dots $width={30}><span /></Dots>
    <FieldBox $width={110}>
      <FormulaButton aria-label="Cancel">
        <Icon size={11} stroke="#b5b5b5" strokeWidth="1.600"><path d="M1 1l9 9M10 1l-9 9" /></Icon>
      </FormulaButton>
      <FormulaButton aria-label="Enter">
        <Icon width={13} height={11} stroke="#b5b5b5" strokeWidth="2.400"><path d="M1 6l4 4 7-9" /></Icon>
      </FormulaButton>
      <FormulaButton aria-label="Insert function">
        <svg width="12" height="16" viewBox="0 0 12 16" fontFamily="Liberation Serif" fontStyle="italic" fontWeight="bold" fill="#555">
          <text x="0" y="12" fontSize="15">f</text>
          <text x="6" y="13" fontSize="11">x</text>
        </svg>
      </FormulaButton>
    </FieldBox>
    <FormulaField>
      <FieldInput aria-label="Formula bar" />
      <Icon width={8} height={6} strokeWidth="2"><path d="M1 1l3 3 3-3" /></Icon>
    </FormulaField>
  </FormulaRow>
)

const Sheet = () => (
  <SheetArea>
    <GridPane>
      <Grid>
        <colgroup>
          <col width={26} />
          {columns.map(([col, width]) => (
            <col key={col} width={width} />
          ))}
          <col />
        </colgroup>
        <thead>
          <tr>
            <CornerHead aria-label="Select all"><CornerMark /></CornerHead>
            {letters.map(col => (
              <ColumnHead key={col} scope="col" $active={col === "C"}>{col}</ColumnHead>
            ))}
            <ColumnHead aria-label="M" />
          </tr>
        </thead>
        <tbody>
          {rowHeights.map((height, i) => (
            <tr key={i} height={height}>
              <RowHead scope="row" $active={i === 3}>{i + 1}</RowHead>
              {letters.map(col => (
                <SheetCell key={col} col={col} row={i + 1} />
              ))}
              <EdgeCell />
            </tr>
          ))}
        </tbody>
      </Grid>
    </GridPane>
    <ScrollColumn>
      <ScrollButton aria-label="Scroll up">
        <Icon size={7} stroke="none"><path d="M0 5.500h7L3.500 1.500z" fill="#777" /></Icon>
      </ScrollButton>
      <Thumb $width={15} $height={136} />
      <ScrollButton aria-label="Scroll down">
        <Icon size={7} stroke="none"><path d="M0 1.500h7L3.500 5.500z" fill="#777" /></Icon>
      </ScrollButton>
    </ScrollColumn>
  </SheetArea>
)

const SheetTabs = () => (
  <SheetBar>
    <SheetNav>
      <Icon width={5} height={8} stroke="none"><path d="M5 0v8L0 4z" fill="#bdbdbd" /></Icon>
      <Icon width={5} height={8} stroke="none"><path d="M0 0v8l5-4z" fill="#bdbdbd" /></Icon>
    </SheetNav>
    <SheetTab $active>Sheet1</SheetTab>
    <SheetTab>Sheet2</SheetTab>
    <TabDivider />
    <AddSheet aria-label="New sheet">
      <Icon size={16}>
        <circle cx="8" cy="8" r="7.500" />
        <path d="M8 4v8M4 8h8" strokeWidth="1.800" />
      </Icon>
    </AddSheet>
    <Dots $width={33}><span /></Dots>
    <ScrollRow>
      <ScrollButton aria-label="Scroll left">
        <Icon size={7} stroke="none"><path d="M5.500 0v7L1.500 3.500z" fill="#555" /></Icon>
      </ScrollButton>
      <Thumb $width={63} $height={15} />
      <ScrollButton aria-label="Scroll right">
        <Icon size={7} stroke="none"><path d="M1.500 0v7l4-3.500z" fill="#555" /></Icon>
      </ScrollButton>
    </ScrollRow>
  </SheetBar>
)

// pen marks drawn over the window
const inkStrokes = [
  "M233 246L241 239L247 262M261 263H248M241 266H251",
  "M290 279Q278 276 267 272Q254 267 240 266Q222 264 203 264Q194 264 187 266Q175 268 167 272Q161 277 155 278Q148 278 143 280Q133 283 128 285Q126 290 126 298V325Q127 332 130 337Q133 342 140 345Q150 348 163 348Q176 348 187 347Q202 345 217 344L243 342Q255 339 267 337L303 336Q314 333 323 332Q338 330 350 328Q361 324 367 318Q375 310 375 302Q375 294 373 289Q370 287 362 286Q357 282 352 282H320Q300 281 288 280",
  "M399 13Q403 10 408 11Q416 12 418 17Q418 24 417 28L414 32Q412 34 411 32Q412 29 417 29L424 25L429 23",
  "M382 26Q372 24 363 25Q355 27 351 32Q346 39 345 48Q346 54 350 58Q349 64 352 67Q356 71 362 72Q375 74 387 74Q395 74 400 72Q407 69 409 65Q413 55 412 45Q411 38 407 36H398Q389 34 380 30",
  "M870 104Q890 104 907 106Q921 107 935 110Q946 108 957 108Q957 114 955 118Q953 125 947 127Q936 130 925 131Q905 135 895 137Q878 139 863 140Q848 140 837 138Q825 136 824 131Q822 125 822 117Q823 110 830 108Q848 105 870 104",
  "M851 152Q862 145 868 144Q868 150 866 157H873Q879 157 879 163Q878 169 873 171Q866 171 861 173Q856 174 848 174",
]

const App = () => (
  <AppShell>
    <GlobalStyle />
    <Header />
    <RibbonBar />
    <FormulaBar />
    <Sheet />
    <SheetTabs />
    <Ink width="1" height="1" fill="none" stroke="#1008d8" strokeWidth="2" strokeLinecap="round" strokeLinejoin="round">
      {inkStrokes.map(d => (
        <path key={d} d={d} />
      ))}
    </Ink>
  </AppShell>
)

export default App
